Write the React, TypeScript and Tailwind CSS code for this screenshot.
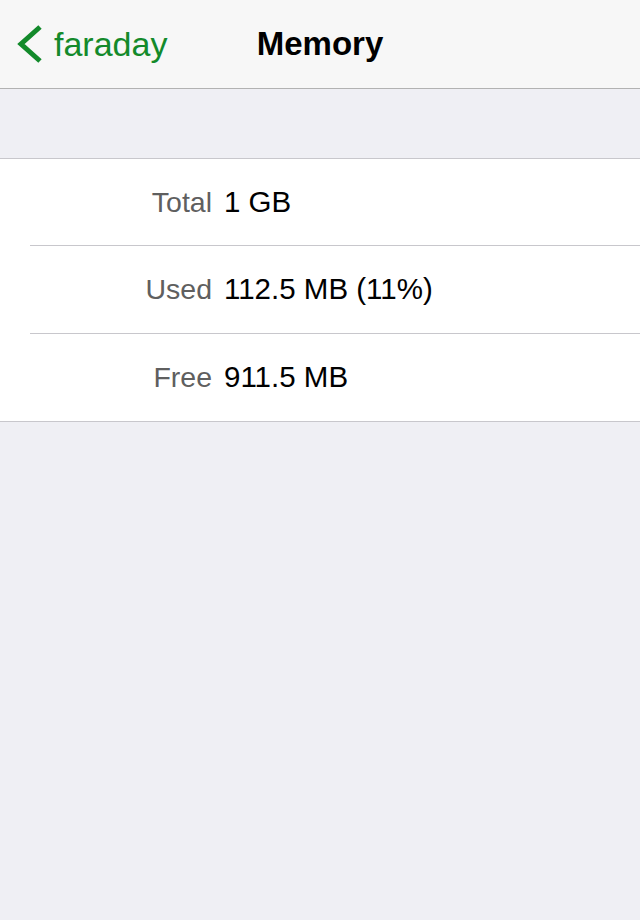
import React from 'react';

const rows = [
  { label: 'Total', value: '1 GB' },
  { label: 'Used', value: '112.5 MB (11%)' },
  { label: 'Free', value: '911.5 MB' },
];

export default function App() {
  return (
    <div className="min-h-[920px] bg-[#efeff4] font-['Liberation_Sans',Arial,sans-serif]">
      {/* nav bar */}
      <div className="relative h-[89px] bg-[#f7f7f7] border-b border-[#b2b2b2] flex items-center">
        <button className="flex items-center pl-[16px] text-[#138a2b]">
          <svg width="28" height="40" viewBox="0 0 28 40" className="mr-[10px]">
            <path d="M24 3 L5 20 L24 37" fill="none" stroke="currentColor" strokeWidth="5" strokeLinecap="butt" strokeLinejoin="miter" />
          </svg>
          <span className="text-[34px] leading-none">faraday</span>
        </button>
        <div className="absolute inset-x-0 text-center text-[33px] font-bold text-black pointer-events-none">
          Memory
        </div>
      </div>

      {/* table */}
      <div className="mt-[69px] bg-white border-y border-[#c8c7cc]">
        {rows.map((r, i) => (
          <div key={r.label} className={i > 0 ? 'ml-[30px] border-t border-[#c8c7cc]' : 'ml-[30px]'}>
            <div className={(i === 0 ? 'h-[86px]' : 'h-[87px]') + ' -ml-[30px] flex items-center'}>
              <span className="w-[212px] text-right text-[28.5px] text-[#5f5f5f]">{r.label}</span>
              <span className="ml-[12px] text-[29.5px] text-black">{r.value}</span>
            </div>
          </div>
        ))}
      </div>
    </div>
  );
}
